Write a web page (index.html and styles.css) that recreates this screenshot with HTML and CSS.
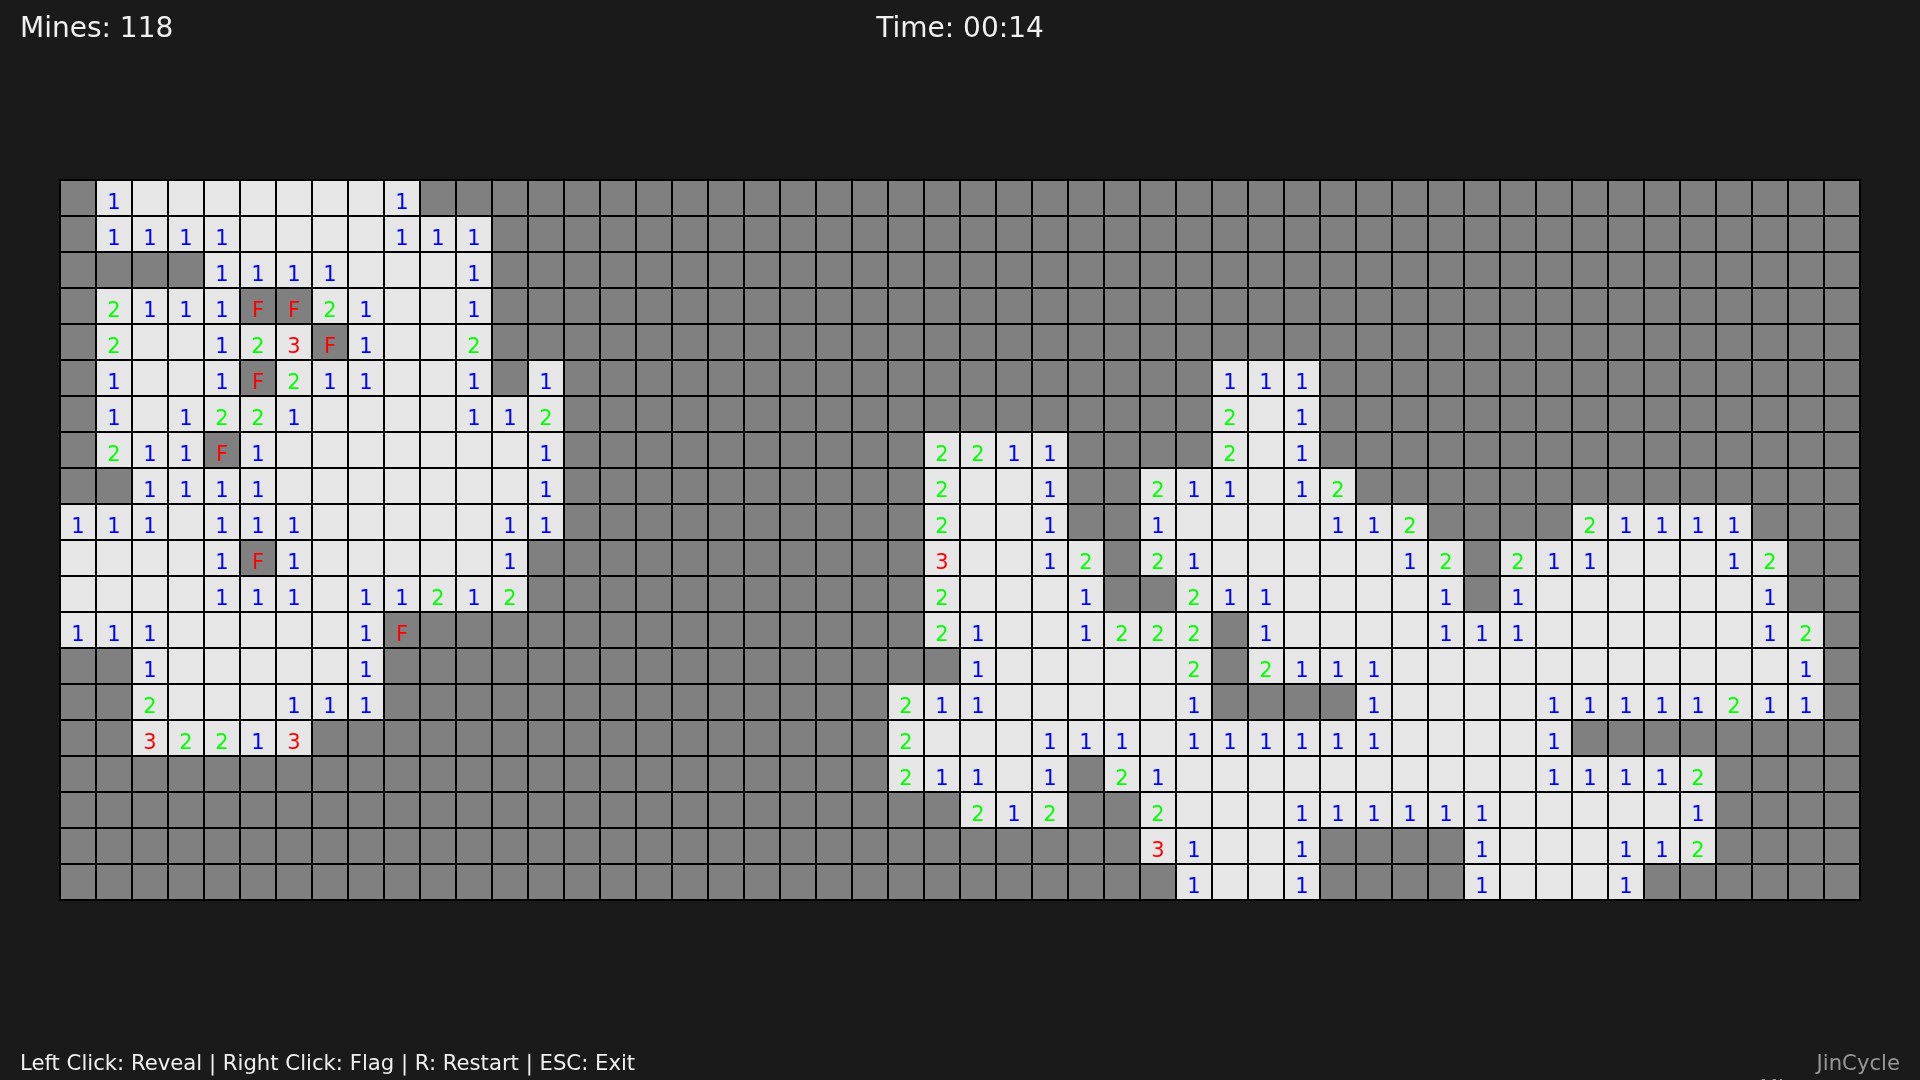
FILE: index.html
```html
<!DOCTYPE html>
<html lang="en">
<head>
<meta charset="utf-8">
<title>Minesweeper</title>
<link rel="stylesheet" href="styles.css">
</head>
<body>
<div class="screen">
  <header class="hud">
    <span class="hud-mines">Mines: 118</span>
    <span class="hud-time">Time: 00:14</span>
  </header>
  <main class="board-wrap">
    <div class="board" id="board"></div>
  </main>
  <footer class="foot">
    <span class="help">Left Click: Reveal | Right Click: Flag | R: Restart | ESC: Exit</span>
    <span class="brand">JinCycle<span class="brand-sub">Minesweeper</span></span>
  </footer>
</div>
<script src="board.js"></script>
</body>
</html>
```

FILE: styles.css
```css
* { box-sizing: border-box; }
html, body { margin: 0; padding: 0; height: 100%; }
body {
  background: #1a1a1a;
  color: #f0f0f0;
  font-family: "DejaVu Sans", sans-serif;
  overflow: hidden;
}
.screen {
  width: 1920px;
  height: 1080px;
  display: flex;
  flex-direction: column;
  filter: blur(0.4px);
}
.hud {
  height: 180px;
  padding: 11px 20px 0;
  display: grid;
  grid-template-columns: 1fr auto 1fr;
  align-items: start;
  font-size: 28px;
  line-height: 34px;
}
.hud-mines { grid-column: 1; }
.hud-time { grid-column: 2; }
.board-wrap {
  height: 720px;
  padding: 0 60px;
}
.board {
  display: grid;
  grid-template-columns: repeat(50, 36px);
  grid-template-rows: repeat(20, 36px);
  outline: 1px solid #000;
}
.cell {
  border: 1px solid #000;
  display: flex;
  align-items: center;
  justify-content: center;
  padding-top: 9px;
  font-size: 21px;
  line-height: 1;
}
.hidden { background: #808080; }
.open { background: #e6e6e6; }
.n1 { color: #0000ff; }
.n2 { color: #00ff00; }
.n3 { color: #ff0000; }
.flag { color: #ff0000; }
.foot {
  height: 180px;
  padding: 150px 20px 0;
  display: flex;
  justify-content: space-between;
  align-items: flex-start;
  font-size: 21.2px;
  line-height: 26px;
}
.brand {
  color: #969696;
  display: flex;
  flex-direction: column;
  align-items: flex-end;
}
.brand-sub { line-height: 24px; }
```

FILE: board.js
```js
var rows = [
  "#1.{7}1#{40}",
  "#1111.{4}111#{38}",
  "#{4}1111.{3}1#{38}",
  "#2111FF21..1#{38}",
  "#2..123F1..2#{38}",
  "#1..1F211..1#1#{18}111#{15}",
  "#1.1221.{4}112#{18}2.1#{15}",
  "#211F1.{7}1#{10}2211#{4}2.1#{15}",
  "##1111.{7}1#{10}2..1##211.12#{14}",
  "111.111.{5}11#{10}2..1##1.{4}112#{4}21111###",
  ".{4}1F1.{5}1#{11}3..12#21.{5}12#211...12##",
  ".{4}111.11212#{11}2...1##211.{4}1#1.{6}1##",
  "111.{5}1F#{14}21..1222#1.{4}111.{6}12#",
  "##1.{5}1#{16}1.{5}2#2111.{11}1#",
  "##2...111#{14}211.{5}1#{4}1.{4}11111211#",
  "##32213#{16}2...111.111111.{4}1#{8}",
  "#{23}211.1#21.{10}11112#{4}",
  "#{25}212##2...111111.{5}1#{4}",
  "#{30}31..1#{4}1...112#{4}",
  "#{31}1..1#{4}1...1#{6}"
];

var board = document.getElementById("board");

rows.forEach(function (row) {
  var cells = row.replace(/(.)\{(\d+)\}/g, function (_, ch, n) {
    return ch.repeat(Number(n));
  });
  cells.split("").forEach(function (ch) {
    var cell = document.createElement("div");
    if (ch === "#") {
      cell.className = "cell hidden";
    } else if (ch === "F") {
      cell.className = "cell hidden flag";
      cell.textContent = "F";
    } else if (ch === ".") {
      cell.className = "cell open";
    } else {
      cell.className = "cell open n" + ch;
      cell.textContent = ch;
    }
    board.appendChild(cell);
  });
});
```
